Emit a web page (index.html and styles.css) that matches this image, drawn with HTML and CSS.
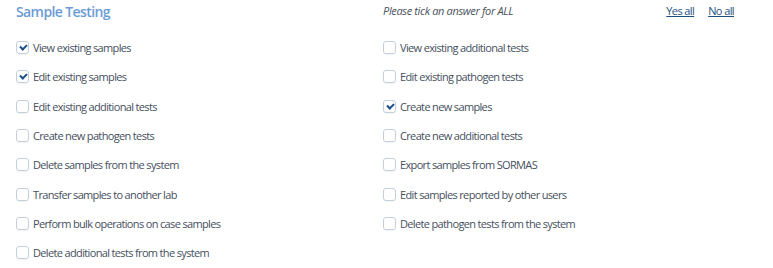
FILE: index.html
```html
<!DOCTYPE html>
<html lang="en">
  <head>
    <meta charset="UTF-8" />
    <title>Sample Testing</title>
    <link rel="stylesheet" href="styles.css">
  </head>
  <body>
    <section class="rights-group">
      <div class="group-header">
        <h2 class="group-title">Sample Testing</h2>
        <div class="group-hint">Please tick an answer for ALL</div>
        <div class="group-links">
          <a href="#">Yes all</a>
          <a href="#">No all</a>
        </div>
      </div>
      <div class="rights-grid">
        <label class="right"><input type="checkbox" checked><span class="box"></span>View existing samples</label>
        <label class="right"><input type="checkbox"><span class="box"></span>View existing additional tests</label>
        <label class="right"><input type="checkbox" checked><span class="box"></span>Edit existing samples</label>
        <label class="right"><input type="checkbox"><span class="box"></span>Edit existing pathogen tests</label>
        <label class="right"><input type="checkbox"><span class="box"></span>Edit existing additional tests</label>
        <label class="right"><input type="checkbox" checked><span class="box"></span>Create new samples</label>
        <label class="right"><input type="checkbox"><span class="box"></span>Create new pathogen tests</label>
        <label class="right"><input type="checkbox"><span class="box"></span>Create new additional tests</label>
        <label class="right"><input type="checkbox"><span class="box"></span>Delete samples from the system</label>
        <label class="right"><input type="checkbox"><span class="box"></span>Export samples from SORMAS</label>
        <label class="right"><input type="checkbox"><span class="box"></span>Transfer samples to another lab</label>
        <label class="right"><input type="checkbox"><span class="box"></span>Edit samples reported by other users</label>
        <label class="right"><input type="checkbox"><span class="box"></span>Perform bulk operations on case samples</label>
        <label class="right"><input type="checkbox"><span class="box"></span>Delete pathogen tests from the system</label>
        <label class="right"><input type="checkbox"><span class="box"></span>Delete additional tests from the system</label>
      </div>
    </section>
  </body>
</html>
```

FILE: styles.css
```css
body {
  margin: 0;
  background: #fff;
  font-family: "Open Sans", sans-serif;
  color: #46505e;
}

.rights-group {
  padding: 0 39px 0 16px;
}

.group-header {
  display: grid;
  grid-template-columns: 367px 1fr auto;
  align-items: center;
  height: 21px;
}

.group-title {
  margin: 0;
  font-size: 14px;
  font-weight: 600;
  letter-spacing: -0.6px;
  color: #6b9bd6;
  padding-top: 2px;
}

.group-hint {
  font-size: 11px;
  font-style: italic;
  letter-spacing: -0.35px;
  color: #4a5260;
}

.group-links {
  display: flex;
  gap: 14px;
  font-size: 11px;
  letter-spacing: -0.6px;
}

.group-links a {
  color: #1e4f7c;
}

.rights-grid {
  display: grid;
  grid-template-columns: 367px 1fr;
  padding-top: 12px;
}

.right {
  display: flex;
  align-items: center;
  height: 29.3px;
  font-size: 11px;
  letter-spacing: -0.65px;
  cursor: pointer;
}

.right input {
  display: none;
}

.box {
  width: 11px;
  height: 11px;
  border: 1px solid #c5cfdc;
  border-radius: 3px;
  margin-right: 4px;
  position: relative;
  box-shadow: 0 1px 1px rgba(0, 0, 0, 0.05);
}

.right input:checked + .box::after {
  content: "";
  position: absolute;
  left: 3px;
  top: 2px;
  width: 5px;
  height: 3px;
  border-left: 2px solid #1b4f8c;
  border-bottom: 2px solid #1b4f8c;
  transform: rotate(-45deg);
}
```
